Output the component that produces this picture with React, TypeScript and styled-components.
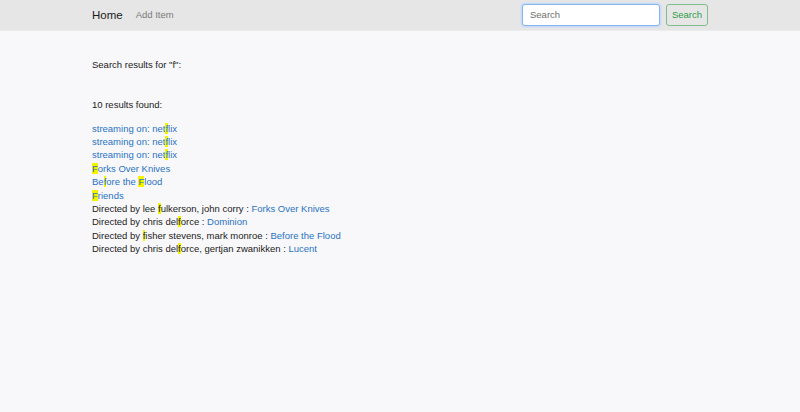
import React from "react";
import styled, { createGlobalStyle } from "styled-components";

const Global = createGlobalStyle`
  html, body { margin: 0; padding: 0; background: #f8f8fa; }
  body { font-family: "Liberation Sans", Arial, sans-serif; color: #222; }
`;

const Nav = styled.nav`
  height: 31px;
  background: #e6e6e7;
  border-bottom: 1px solid #ececee;
  box-sizing: border-box;
`;

const Container = styled.div`
  width: 616px;
  margin: 0 auto;
`;

const NavInner = styled(Container)`
  height: 100%;
  display: flex;
  align-items: center;
`;

const Brand = styled.a`
  font-size: 11.5px;
  color: #1a1a1a;
  margin-right: 13px;
  margin-top: -1px;
`;

const NavLink = styled.a`
  font-size: 9.5px;
  color: #7a7a7a;
  margin-top: -1px;
`;

const Form = styled.form`
  margin-left: auto;
  display: flex;
  gap: 6px;
  margin-top: -1px;
`;

const Input = styled.input`
  width: 138px;
  height: 22px;
  box-sizing: border-box;
  border: 1px solid #8ab4ec;
  box-shadow: 0 0 0 1.5px #c8dcf7;
  border-radius: 3px;
  font-family: "Liberation Sans", Arial, sans-serif;
  font-size: 9.5px;
  padding: 0 7px;
  background: #fff;
  color: #666;
  outline: none;
  &::placeholder { color: #6e6e6e; }
`;

const Button = styled.button`
  width: 42px;
  height: 22px;
  box-sizing: border-box;
  border: 1px solid #7fbf8b;
  border-radius: 3px;
  background: transparent;
  color: #2e9b47;
  font-family: "Liberation Sans", Arial, sans-serif;
  font-size: 9.5px;
  padding: 0;
`;

const Main = styled(Container)`
  padding-top: 27px;
  font-size: 9.5px;
  line-height: 13.4px;
`;

const Para = styled.p<{ $gap?: number }>`
  margin: 0 0 ${(p) => p.$gap ?? 0}px;
`;

const List = styled.div`
  display: flex;
  flex-direction: column;
`;

const Row = styled.div``;

const Link = styled.a`
  color: #2a72c4;
  text-decoration: none;
`;

const Mark = styled.mark`
  background: #f4f400;
  color: inherit;
  padding: 0;
`;

function hl(text: string) {
  const parts = text.split(/(f)/i);
  return parts.map((p, i) =>
    p.toLowerCase() === "f" ? <Mark key={i}>{p}</Mark> : <React.Fragment key={i}>{p}</React.Fragment>
  );
}

const titles = [
  "streaming on: netflix",
  "streaming on: netflix",
  "streaming on: netflix",
  "Forks Over Knives",
  "Before the Flood",
  "Friends",
];

const directed = [
  ["lee fulkerson, john corry", "Forks Over Knives"],
  ["chris delforce", "Dominion"],
  ["fisher stevens, mark monroe", "Before the Flood"],
  ["chris delforce, gertjan zwanikken", "Lucent"],
];

export default function App() {
  return (
    <>
      <Global />
      <Nav>
        <NavInner>
          <Brand>Home</Brand>
          <NavLink>Add Item</NavLink>
          <Form onSubmit={(e) => e.preventDefault()}>
            <Input placeholder="Search" />
            <Button type="submit">Search</Button>
          </Form>
        </NavInner>
      </Nav>
      <Main>
        <Para $gap={26.6}>Search results for "f":</Para>
        <Para $gap={10.2}>10 results found:</Para>
        <List>
          {titles.map((t, i) => (
            <Row key={i}>
              <Link>{hl(t)}</Link>
            </Row>
          ))}
          {directed.map(([d, t], i) => (
            <Row key={i}>
              Directed by {hl(d)} : <Link>{t}</Link>
            </Row>
          ))}
        </List>
      </Main>
    </>
  );
}
